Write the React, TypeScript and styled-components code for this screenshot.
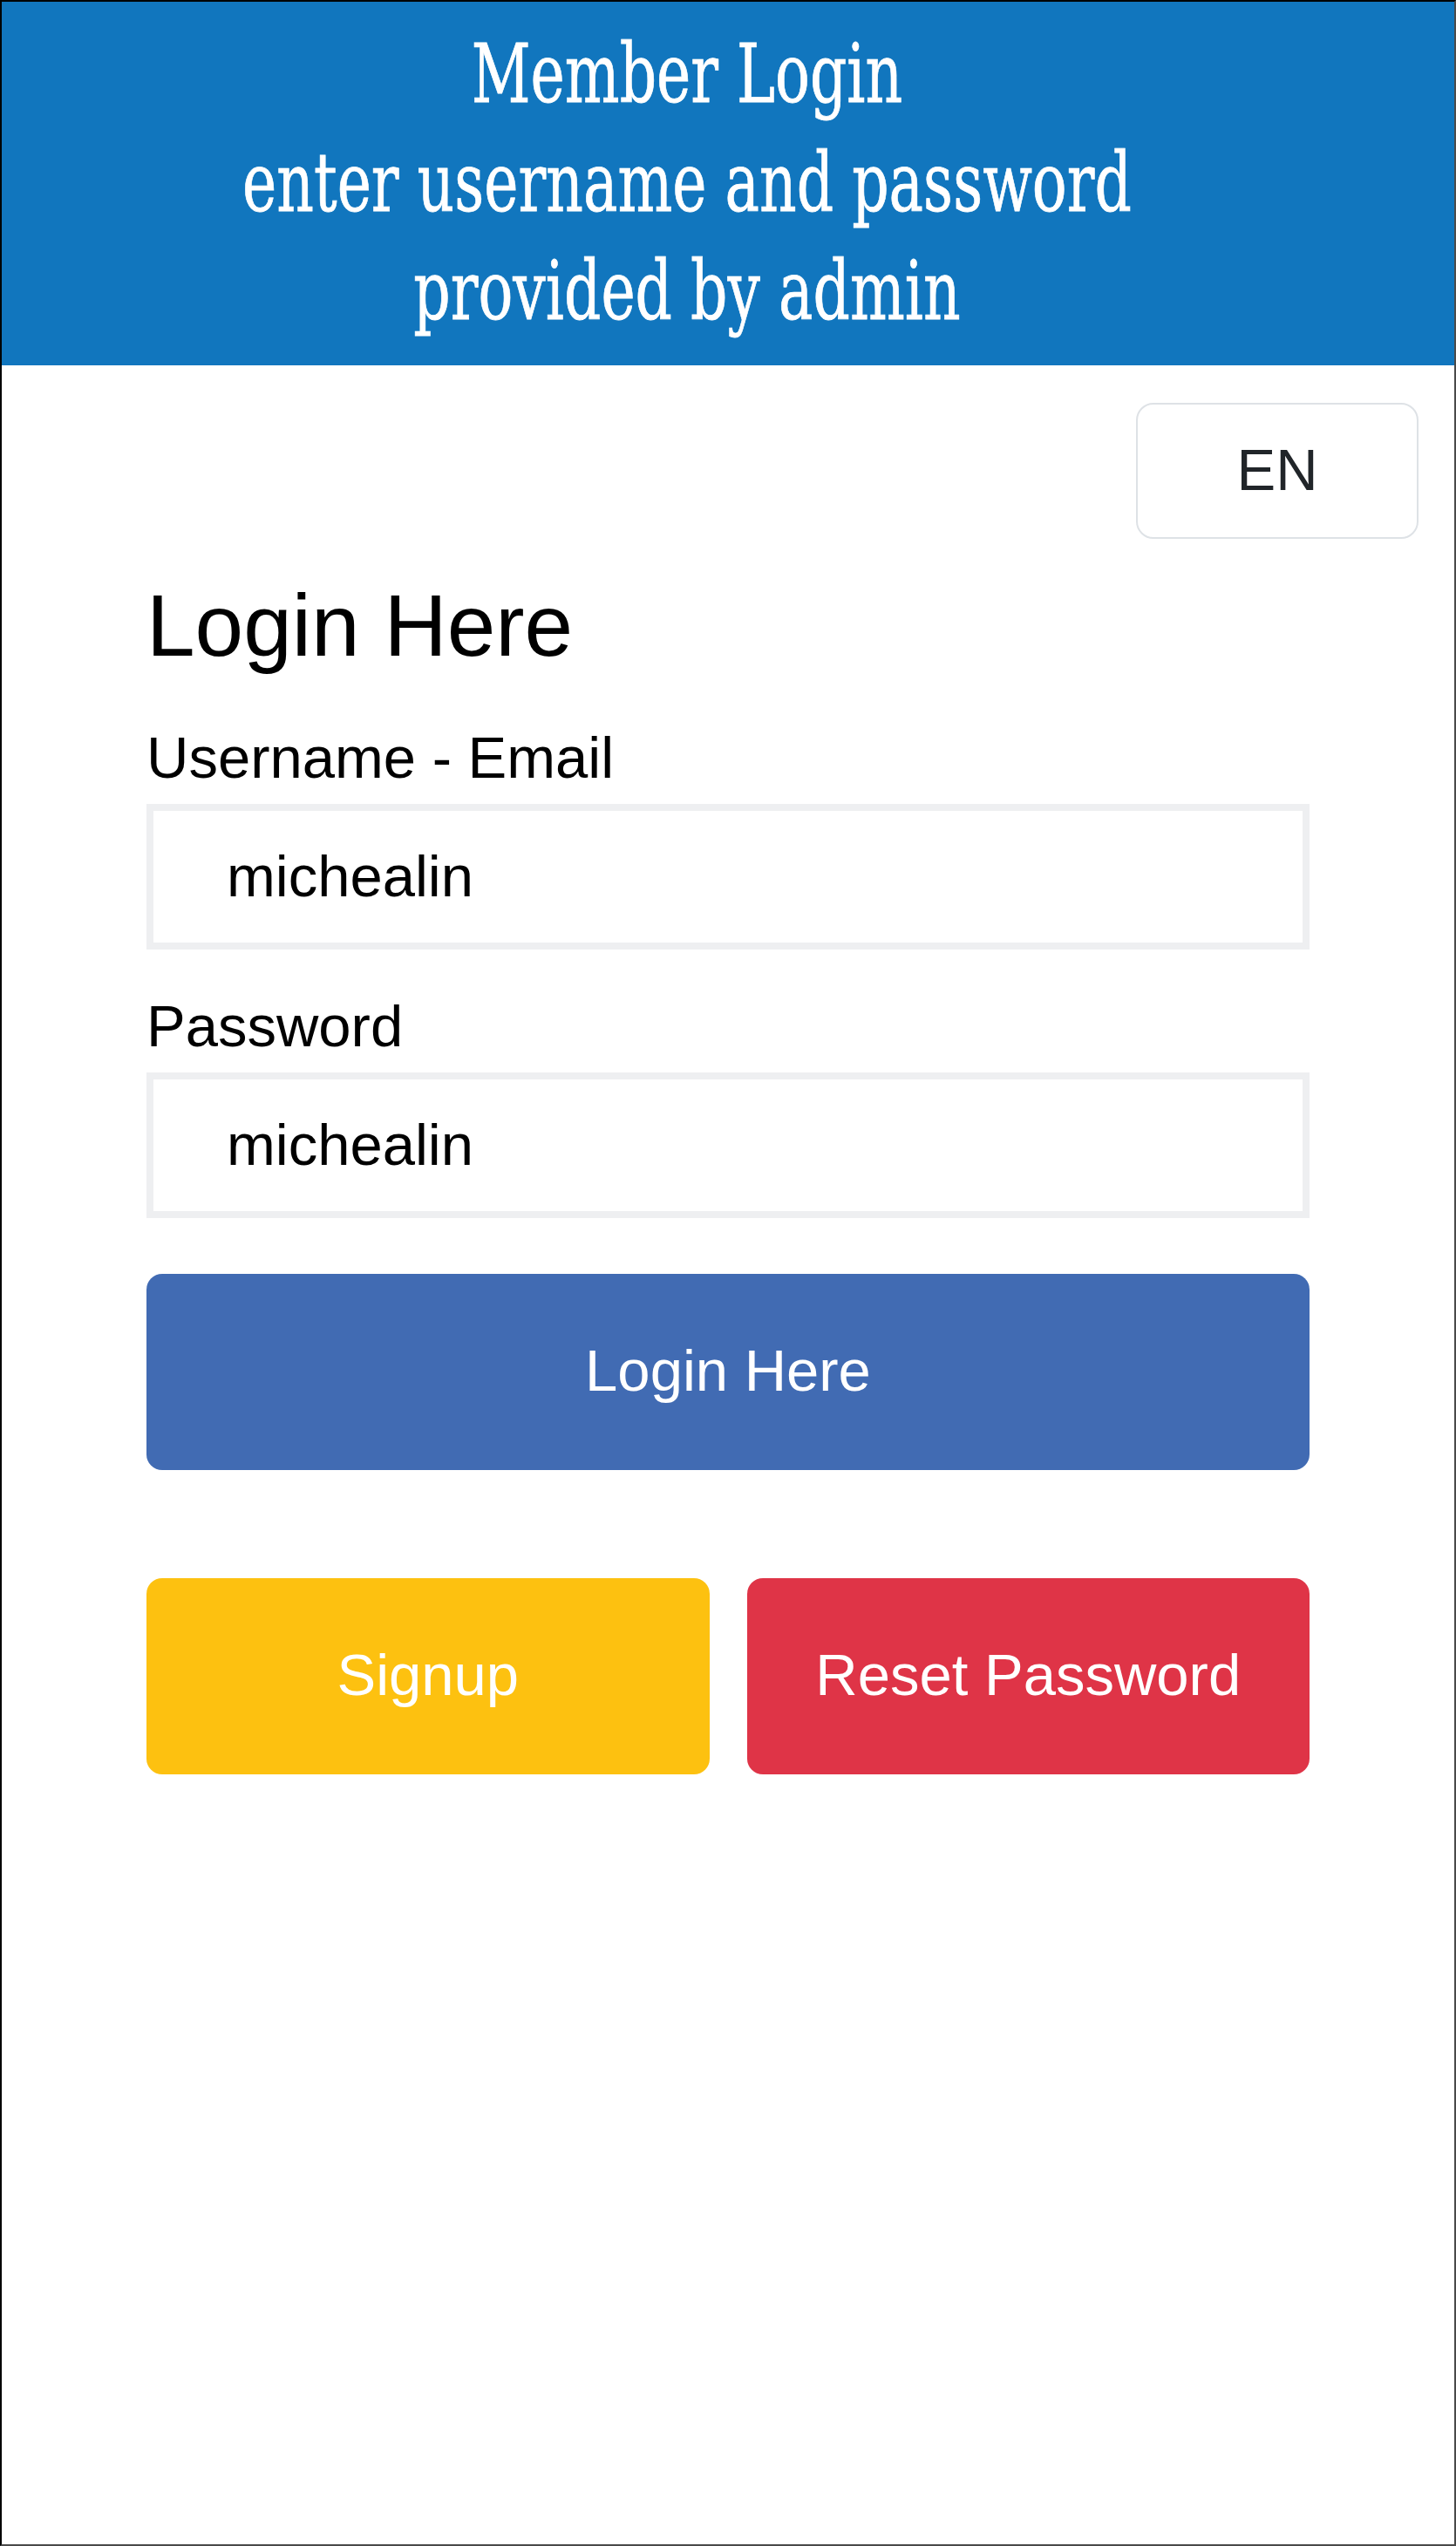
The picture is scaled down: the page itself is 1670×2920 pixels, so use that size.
import React from "react";
import styled, { createGlobalStyle } from "styled-components";

const GlobalStyle = createGlobalStyle`
  html, body {
    margin: 0;
    padding: 0;
    background: #ffffff;
  }
  * { box-sizing: border-box; }
`;

const Page = styled.div`
  width: 1670px;
  min-height: 2920px;
  display: flex;
  flex-direction: column;
  border-top: 2px solid #000000;
  border-left: 2px solid #000000;
  border-right: 2px solid #4a4a4a;
  border-bottom: 2px solid #4a4a4a;
  background: #ffffff;
  font-family: "Liberation Sans", Arial, sans-serif;
`;

const Header = styled.header`
  height: 417px;
  background: #1176be;
  padding: 21px 94px 0 0;
  overflow: hidden;
`;

const HeaderTitle = styled.h1`
  margin: 0;
  font-family: "DejaVu Serif", "Liberation Serif", serif;
  font-weight: 400;
  font-size: 94px;
  line-height: 124.5px;
  color: #ffffff;
  text-align: center;
  transform: scaleX(0.705);
  transform-origin: center top;
  white-space: nowrap;
  -webkit-text-stroke: 0.8px #ffffff;
`;

const LangBar = styled.div`
  display: flex;
  justify-content: flex-end;
  padding: 43px 41px 0 0;
`;

const LangButton = styled.button`
  width: 324px;
  height: 156px;
  border: 2px solid #dee2e6;
  border-radius: 20px;
  background: #ffffff;
  color: #212529;
  font-family: "Liberation Sans", Arial, sans-serif;
  font-size: 67px;
  padding: 0 0 4px;
`;

const Form = styled.form`
  width: 1334px;
  margin: 39px auto 0;
  display: flex;
  flex-direction: column;
`;

const Heading = styled.h2`
  margin: 0 0 52px;
  font-size: 100px;
  line-height: 120px;
  font-weight: 400;
  color: #000000;
`;

const Field = styled.div<{ $gapTop?: number }>`
  display: flex;
  flex-direction: column;
  margin-top: ${(p) => p.$gapTop ?? 0}px;
`;

const Label = styled.label`
  font-size: 67px;
  line-height: 80px;
  color: #000000;
  margin-bottom: 13px;
`;

const Input = styled.input`
  height: 167px;
  border: 8px solid #eeeff1;
  border-radius: 0;
  padding: 0 0 2px 84px;
  font-family: "Liberation Sans", Arial, sans-serif;
  font-size: 67px;
  color: #000000;
  background: #ffffff;
  outline: none;
`;

const ActionButton = styled.button<{ $bg: string }>`
  height: 225px;
  border: none;
  border-radius: 18px;
  background: ${(p) => p.$bg};
  color: #ffffff;
  font-family: "Liberation Sans", Arial, sans-serif;
  font-size: 67px;
  padding: 0 0 4px;
`;

const LoginButton = styled(ActionButton)`
  margin-top: 64px;
`;

const ButtonRow = styled.div`
  margin-top: 124px;
  display: grid;
  grid-template-columns: 1fr 1fr;
  column-gap: 43px;
`;

export default function App() {
  return (
    <>
      <GlobalStyle />
      <Page>
        <Header>
          <HeaderTitle>
            Member Login
            <br />
            enter username and password
            <br />
            provided by admin
          </HeaderTitle>
        </Header>
        <LangBar>
          <LangButton type="button">EN</LangButton>
        </LangBar>
        <Form onSubmit={(e) => e.preventDefault()}>
          <Heading>Login Here</Heading>
          <Field>
            <Label htmlFor="username">Username - Email</Label>
            <Input id="username" type="text" defaultValue="michealin" />
          </Field>
          <Field $gapTop={48}>
            <Label htmlFor="password">Password</Label>
            <Input id="password" type="text" defaultValue="michealin" />
          </Field>
          <LoginButton type="submit" $bg="#416bb3">
            Login Here
          </LoginButton>
          <ButtonRow>
            <ActionButton type="button" $bg="#fdc110">
              Signup
            </ActionButton>
            <ActionButton type="button" $bg="#df3447">
              Reset Password
            </ActionButton>
          </ButtonRow>
        </Form>
      </Page>
    </>
  );
}
